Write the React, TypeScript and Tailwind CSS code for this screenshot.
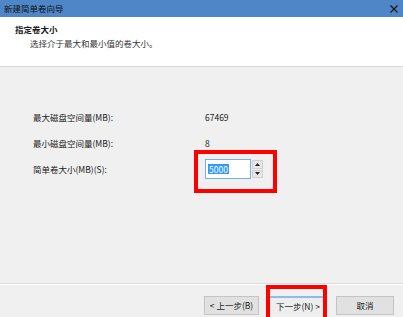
import React from 'react';

const font = { fontFamily: '"Noto Sans CJK SC", "Noto Sans", sans-serif' };

function SpinBox({ value }: { value: string }) {
  return (
    <div className="flex h-[20px]">
      <div className="flex h-full w-[46px] items-center border border-[#7aaee0] bg-white pl-[2px]">
        <span className="bg-[#3399ff] px-[1px] leading-[10px] text-white">{value}</span>
      </div>
      <div className="ml-px flex w-[11px] flex-col gap-px py-px">
        <button className="flex flex-1 items-center justify-center border border-[#d0d0d0] bg-[#e8e8e8]">
          <svg width="5" height="3" viewBox="0 0 5 3">
            <path d="M0 3 L2.5 0 L5 3 Z" fill="#222" />
          </svg>
        </button>
        <button className="flex flex-1 items-center justify-center border border-[#d0d0d0] bg-[#e8e8e8]">
          <svg width="5" height="3" viewBox="0 0 5 3">
            <path d="M0 0 L2.5 3 L5 0 Z" fill="#222" />
          </svg>
        </button>
      </div>
    </div>
  );
}

export default function App() {
  const rows = [
    { label: '最大磁盘空间量(MB):', value: '67469' },
    { label: '最小磁盘空间量(MB):', value: '8' },
  ];

  return (
    <div
      className="relative flex h-[317px] w-[403px] flex-col overflow-hidden bg-[#f0f0f0] text-[8.5px] text-[#1a1a1a]"
      style={font}
    >
      {/* title bar */}
      <div className="flex h-[17px] items-center justify-between bg-[#4e86c7] pl-[4px] pr-[5px]">
        <span className="text-[8.5px] text-[#111]">新建简单卷向导</span>
        <svg width="8" height="8" viewBox="0 0 8 8">
          <path d="M0.5 0.5 L7.5 7.5 M7.5 0.5 L0.5 7.5" stroke="#111" strokeWidth="1.1" />
        </svg>
      </div>

      {/* header */}
      <div className="h-[50px] border-b border-[#d9d9d9] bg-white pt-[7px]">
        <div className="pl-[15px] font-bold leading-[11px]">指定卷大小</div>
        <div className="mt-[3px] pl-[30px] leading-[11px] text-[#333]">
          选择介于最大和最小值的卷大小。
        </div>
      </div>

      {/* body */}
      <div className="flex flex-1 flex-col pl-[33px] pt-[37px]">
        {rows.map((r) => (
          <div key={r.label} className="flex h-[26px] items-center">
            <span className="w-[172px]">{r.label}</span>
            <span>{r.value}</span>
          </div>
        ))}
        <div className="flex h-[26px] items-center">
          <span className="w-[172px]">简单卷大小(MB)(S):</span>
          <SpinBox value="5000" />
        </div>
      </div>

      {/* footer */}
      <div className="flex h-[34px] items-start justify-end gap-[11px] border-t border-[#dcdcdc] pr-[9px] pt-[12px] shadow-[inset_0_1px_0_#fff]">
        <div className="flex">
          <button className="flex h-[19px] w-[55px] items-center justify-center border border-[#c4c4c4] bg-[#e1e1e1]">
            &lt; 上一步(B)
          </button>
          <button className="ml-[10px] flex h-[19px] w-[56px] items-center justify-start border-t-2 border-[#8cbcea] bg-[#eeeeee] pl-[7px]">
            下一步(N) &gt;
          </button>
        </div>
        <button className="flex h-[19px] w-[58px] items-center justify-center border border-[#c4c4c4] bg-[#e1e1e1]">
          取消
        </button>
      </div>

      {/* red annotation boxes */}
      <div className="pointer-events-none absolute left-[194px] top-[150px] h-[43px] w-[83px] border-4 border-[#ff0000]" />
      <div className="pointer-events-none absolute left-[266px] top-[285px] h-[36px] w-[61px] border-4 border-[#ff0000]" />
    </div>
  );
}
